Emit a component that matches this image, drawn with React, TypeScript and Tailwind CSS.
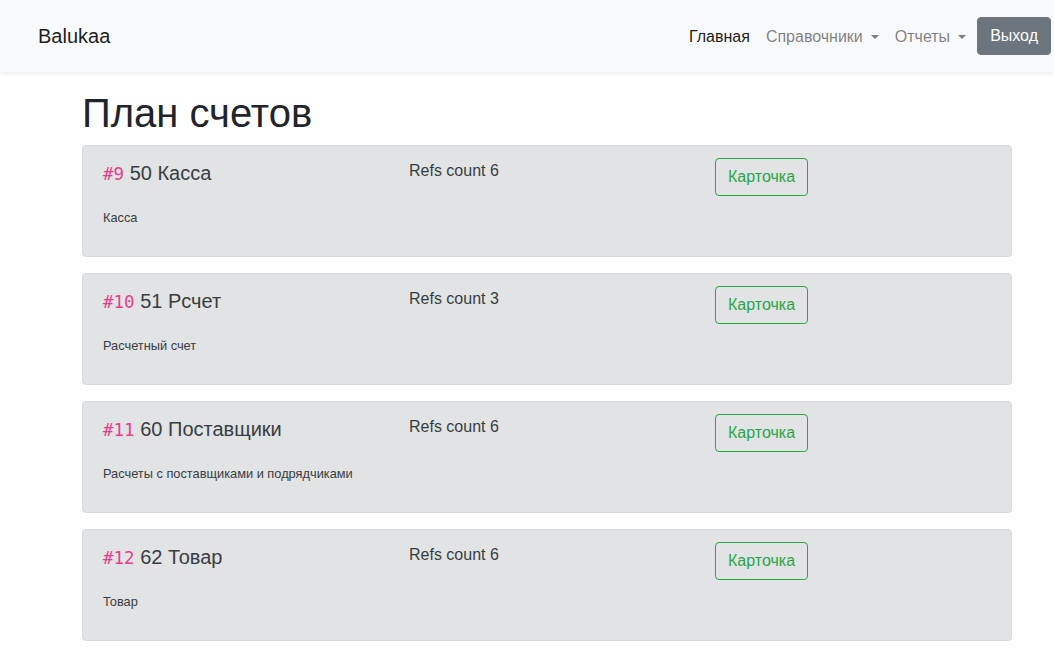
const accounts = [
  { id: 9, code: "50", name: "Касса", refs: 6, description: "Касса" },
  { id: 10, code: "51", name: "Рсчет", refs: 3, description: "Расчетный счет" },
  { id: 11, code: "60", name: "Поставщики", refs: 6, description: "Расчеты с поставщиками и подрядчиками" },
  { id: 12, code: "62", name: "Товар", refs: 6, description: "Товар" },
];

function Caret() {
  return (
    <span className="ml-2 inline-block align-[3px] border-x-[4px] border-t-[4px] border-x-transparent border-t-current" />
  );
}

function Header() {
  return (
    <nav className="h-[72px] bg-[#f8f9fa] shadow-[0_2px_4px_rgba(0,0,0,0.075)] flex items-center justify-between pl-[38px] pr-[3px]">
      <a className="text-[20px] leading-[30px] text-black/90">Balukaa</a>
      <div className="flex items-center">
        <a className="px-2 pt-[9px] pb-[7px] text-black/90">Главная</a>
        <a className="px-2 pt-[9px] pb-[7px] text-black/50">
          Справочники
          <Caret />
        </a>
        <a className="px-2 pt-[9px] pb-[7px] text-black/50">
          Отчеты
          <Caret />
        </a>
        <button className="ml-[3px] bg-[#6c757d] text-white px-3 py-[6px] leading-6 rounded border border-[#6c757d]">
          Выход
        </button>
      </div>
    </nav>
  );
}

function AccountCard({ a }: { a: (typeof accounts)[number] }) {
  return (
    <div className="h-[112px] mb-4 bg-[#e2e3e5] border border-[#d6d8db] rounded px-5 py-3 text-[#383d41]">
      <div className="grid grid-cols-3 gap-[30px]">
        <div>
          <h5 className="mt-[3px] text-[20px] leading-6">
            <code className="text-[17.5px] text-[#e83e8c] font-['DejaVu_Sans_Mono',monospace]">#{a.id}</code>{" "}
            {a.code} {a.name}
          </h5>
          <p className="mt-[22px] text-[12.8px] leading-[19px]">{a.description}</p>
        </div>
        <div className="pt-px leading-6">Refs count {a.refs}</div>
        <div>
          <button className="border border-[#28a745] text-[#28a745] rounded px-3 py-[6px] leading-6">
            Карточка
          </button>
        </div>
      </div>
    </div>
  );
}

export default function App() {
  return (
    <div className="min-h-screen bg-white text-[16px] text-[#212529] font-['Liberation_Sans',Arial,sans-serif]">
      <Header />
      <main className="w-[930px] ml-[82px] pt-[17px]">
        <h1 className="text-[40px] leading-[48px] mb-2 font-normal">План счетов</h1>
        {accounts.map((a) => (
          <AccountCard key={a.id} a={a} />
        ))}
      </main>
    </div>
  );
}
